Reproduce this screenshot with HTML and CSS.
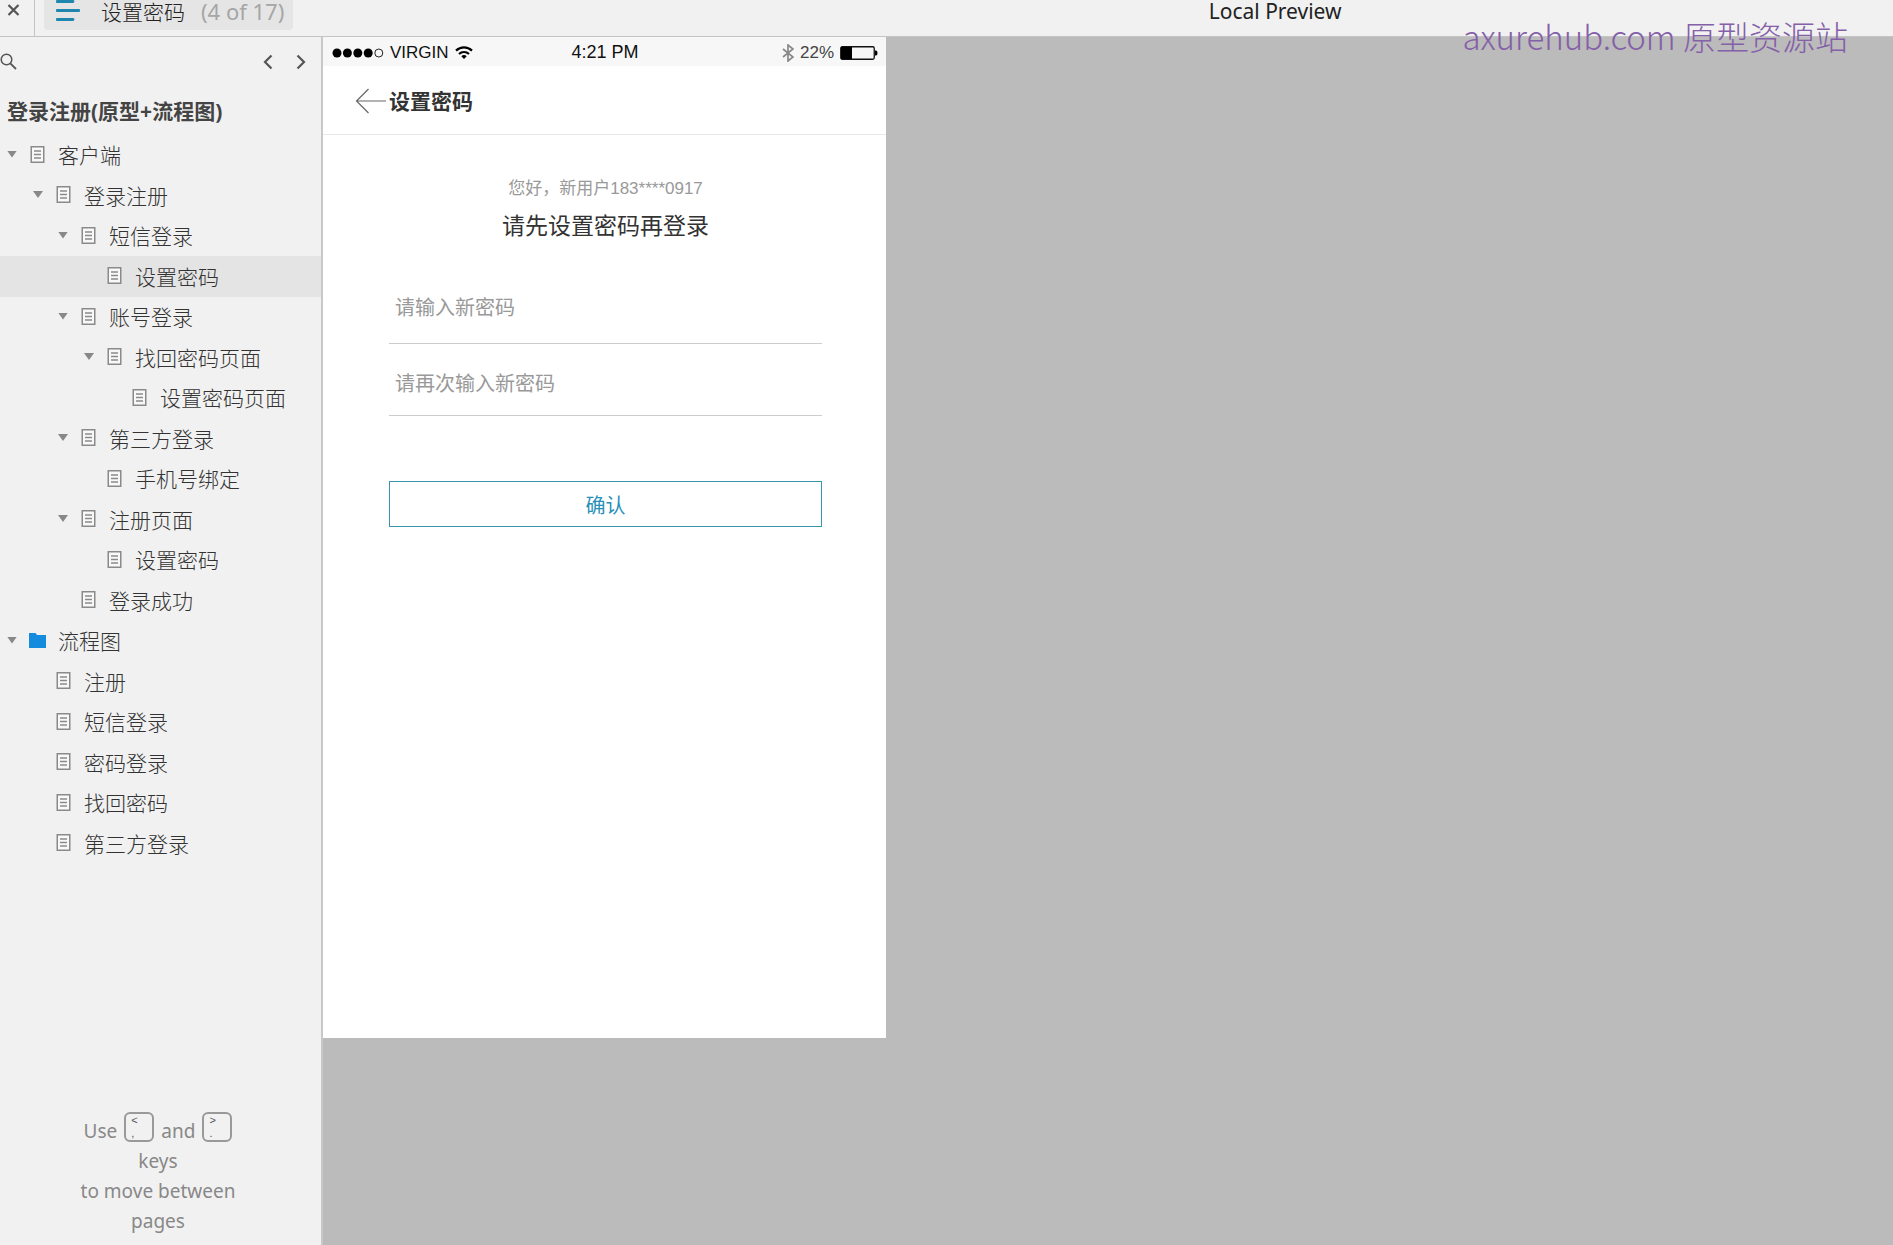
FILE: index.html
```html
<!DOCTYPE html>
<html lang="zh-CN">
<head>
<meta charset="utf-8">
<meta name="viewport" content="width=device-width, initial-scale=1">
<title>设置密码</title>
<link rel="stylesheet" href="styles.css">
</head>
<body>
<svg class="sprite" aria-hidden="true">
  <symbol id="doc" viewBox="0 0 14 17"><path d="M.75.75h12.5v15.5H.75z" fill="#f8f8f8" stroke="#8a8a8a" stroke-width="1.500"/><path d="M3.500 5h7M3.500 8.500h7M3.500 12h7" stroke="#8a8a8a" stroke-width="1.300"/></symbol>
  <symbol id="folder" viewBox="0 0 17 15"><path d="M0 0h6.500l1.500 2h9v13H0z" fill="#148bdc"/></symbol>
</svg>

<header class="topbar">
  <button class="close" aria-label="关闭"><svg width="13" height="12" viewBox="0 0 12 12"><path d="M1 1l10 10M11 1L1 11" stroke="#555" stroke-width="2.200"/></svg></button>
  <button class="page-menu">
    <svg width="24" height="22" viewBox="0 0 24 22"><path d="M1 1.500h16M1 10.500h22M1 19.500h16" stroke="#1f86b0" stroke-width="2.800" stroke-linecap="round"/></svg>
    <span class="page-name">设置密码</span>
    <span class="page-count">(4 of 17)</span>
  </button>
  <span class="preview-title">Local Preview</span>
</header>
<div class="watermark">axurehub.com 原型资源站</div>

<div class="workspace">
  <aside class="sidebar">
    <div class="tools">
      <button aria-label="搜索"><svg width="17" height="17" viewBox="0 0 17 17" fill="none" stroke="#555" stroke-width="1.500"><circle cx="6.500" cy="6.500" r="5.300"/><path d="M10.300 10.300L16 16" stroke-width="1.800"/></svg></button>
      <button class="previous" aria-label="上一页"><svg width="10" height="16" viewBox="0 0 10 16"><path d="M8.500 1.500L2 8l6.500 6.500" fill="none" stroke="#555" stroke-width="2.200"/></svg></button>
      <button aria-label="下一页"><svg width="10" height="16" viewBox="0 0 10 16"><path d="M1.500 1.500L8 8l-6.500 6.500" fill="none" stroke="#555" stroke-width="2.200"/></svg></button>
    </div>
    <h1 class="project">登录注册(原型+流程图)</h1>
    <nav>
      <ul class="tree">
        <li><a class="open" href="#"><svg class="icon"><use href="#doc"/></svg>客户端</a></li>
        <li><a class="open level-1" href="#"><svg class="icon"><use href="#doc"/></svg>登录注册</a></li>
        <li><a class="open level-2" href="#"><svg class="icon"><use href="#doc"/></svg>短信登录</a></li>
        <li><a class="level-3 current" href="#" aria-current="page"><svg class="icon"><use href="#doc"/></svg>设置密码</a></li>
        <li><a class="open level-2" href="#"><svg class="icon"><use href="#doc"/></svg>账号登录</a></li>
        <li><a class="open level-3" href="#"><svg class="icon"><use href="#doc"/></svg>找回密码页面</a></li>
        <li><a class="level-4" href="#"><svg class="icon"><use href="#doc"/></svg>设置密码页面</a></li>
        <li><a class="open level-2" href="#"><svg class="icon"><use href="#doc"/></svg>第三方登录</a></li>
        <li><a class="level-3" href="#"><svg class="icon"><use href="#doc"/></svg>手机号绑定</a></li>
        <li><a class="open level-2" href="#"><svg class="icon"><use href="#doc"/></svg>注册页面</a></li>
        <li><a class="level-3" href="#"><svg class="icon"><use href="#doc"/></svg>设置密码</a></li>
        <li><a class="level-2" href="#"><svg class="icon"><use href="#doc"/></svg>登录成功</a></li>
        <li><a class="open" href="#"><svg class="icon"><use href="#folder"/></svg>流程图</a></li>
        <li><a class="level-1" href="#"><svg class="icon"><use href="#doc"/></svg>注册</a></li>
        <li><a class="level-1" href="#"><svg class="icon"><use href="#doc"/></svg>短信登录</a></li>
        <li><a class="level-1" href="#"><svg class="icon"><use href="#doc"/></svg>密码登录</a></li>
        <li><a class="level-1" href="#"><svg class="icon"><use href="#doc"/></svg>找回密码</a></li>
        <li><a class="level-1" href="#"><svg class="icon"><use href="#doc"/></svg>第三方登录</a></li>
      </ul>
    </nav>
    <p class="hint">
      <span class="hint-keys">Use <kbd><span>&lt;</span><span>,</span></kbd> and <kbd><span>&gt;</span><span>.</span></kbd></span>
      keys<br>to move between<br>pages
    </p>
  </aside>

  <main class="canvas">
    <section class="phone">
      <div class="status">
        <div class="carrier">
          <svg width="52" height="10" viewBox="0 0 52 10"><circle cx="5" cy="5" r="4.500"/><circle cx="15.400" cy="5" r="4.500"/><circle cx="25.800" cy="5" r="4.500"/><circle cx="36.200" cy="5" r="4.500"/><circle cx="46.800" cy="5" r="4" fill="none" stroke="#222"/></svg>
          <span>VIRGIN</span>
          <svg width="18" height="13" viewBox="0 0 18 13" fill="none" stroke="#000" stroke-width="2.200"><path d="M1 4.600C5.500.2 12.500.2 17 4.600M4 8c2.800-2.700 7.200-2.700 10 0"/><path d="M6.300 10.200c1.500-1.500 3.900-1.500 5.400 0L9 13z" fill="#000" stroke="none"/></svg>
        </div>
        <time class="clock">4:21 PM</time>
        <div class="power">
          <svg width="12" height="18" viewBox="0 0 12 18"><path d="M1 5l10 8-5 4V1l5 4-10 8" fill="none" stroke="#888" stroke-width="1.700"/></svg>
          <span>22%</span>
          <svg width="38" height="14" viewBox="0 0 38 14"><rect x=".75" y=".75" width="33.500" height="12.500" rx="1.500" fill="none" stroke="#111" stroke-width="1.300"/><path d="M1 1h11v12H1z"/><path d="M35 4.500h1q1.500 0 1.500 2.500T36 9.500h-1z"/></svg>
        </div>
      </div>
      <header class="title-bar">
        <a href="#" aria-label="返回"><svg width="31" height="26" viewBox="0 0 31 26"><path d="M13.500 1L1.500 13l12 12M1.500 13H31" fill="none" stroke="#666" stroke-width="1.200"/></svg></a>
        <h2>设置密码</h2>
      </header>
      <form class="form">
        <p class="greeting">您好，新用户183****0917</p>
        <h3>请先设置密码再登录</h3>
        <input class="first" type="password" placeholder="请输入新密码" aria-label="请输入新密码">
        <input class="second" type="password" placeholder="请再次输入新密码" aria-label="请再次输入新密码">
        <button class="confirm" type="button">确认</button>
      </form>
    </section>
  </main>
</div>
</body>
</html>
```
FILE: styles.css
```css
* { box-sizing: border-box; margin: 0; padding: 0; }

body {
  position: relative;
  display: flex;
  flex-direction: column;
  min-height: 100vh;
  background: #bbb;
  color: #444;
  font-family: "Noto Sans", "Noto Sans CJK SC", sans-serif;
  font-size: 21px;
}

svg { display: block; flex: none; }
button { border: 0; background: none; font: inherit; color: inherit; cursor: pointer; }
a { color: inherit; text-decoration: none; }
.sprite { position: absolute; width: 0; height: 0; }

/* Top bar */
.topbar {
  display: grid;
  grid-template-columns: 35px auto 1fr;
  align-items: start;
  height: 37px;
  background: #f1f1f1;
  border-bottom: 1px solid #c4c4c4;
}
.close { display: flex; height: 36px; padding: 4px 0 0 7px; border-right: 1px solid #c4c4c4; }
.page-menu {
  display: flex;
  height: 30px;
  margin-left: 9px;
  padding: 0 9px 0 12px;
  border-radius: 0 0 4px 4px;
  background: #e5e5e5;
  line-height: 22px;
}
.page-name { margin-left: 21px; color: #222; font-family: "Noto Sans CJK SC", sans-serif; font-weight: 300; }
.page-count { margin-left: 16px; color: #a6a6a6; font-size: 22px; }
.preview-title { justify-self: center; padding-left: 364px; color: #222; font-size: 21px; line-height: 22px; }

.watermark {
  position: absolute;
  top: 12px;
  right: 45px;
  color: #8460a8;
  font-family: "Noto Sans CJK SC", sans-serif;
  font-size: 33px;
  font-weight: 300;
  line-height: 48px;
}

.workspace { display: flex; flex: 1; }

/* Page tree */
.sidebar {
  display: flex;
  flex: none;
  flex-direction: column;
  width: 323px;
  border-right: 2px solid #c8c8c8;
  background: #f1f1f1;
}
.tools { display: flex; gap: 23px; padding: 16px 15px 0 0; }
.tools .previous { margin-left: auto; }
.project { padding: 25px 0 8px 7px; font-size: 21px; line-height: 32px; }
.tree { list-style: none; }
.tree a {
  display: flex;
  align-items: center;
  height: 40px;
  padding: 0 0 2px 7px;
  color: #333;
  font-family: "Noto Sans CJK SC", sans-serif;
  font-weight: 300;
}
.tree li:nth-child(even) a { height: 41px; }
.tree a::before { content: ""; width: 10px; height: 7px; margin-right: 12px; }
.tree .open::before { background: #888; clip-path: polygon(0 0, 100% 0, 50% 100%); }
.tree .level-1 { padding-left: 33px; }
.tree .level-2 { padding-left: 58px; }
.tree .level-3 { padding-left: 84px; }
.tree .level-4 { padding-left: 109px; }
.tree .current { background: #e4e4e4; }
.icon { width: 17px; height: 17px; margin-right: 12px; }

.hint {
  margin-top: auto;
  padding: 0 5px 9px 0;
  color: #888;
  font-size: 19px;
  line-height: 30px;
  text-align: center;
}
.hint-keys { display: flex; justify-content: center; gap: 7px; }
kbd {
  display: flex;
  flex-direction: column;
  width: 30px;
  height: 30px;
  margin-top: -4px;
  padding-left: 5px;
  border: 2px solid #999;
  border-radius: 6px;
  color: #555;
  font: 11px/13px "Liberation Sans", sans-serif;
  text-align: left;
}

/* Phone prototype */
.canvas { flex: 1; }
.phone { width: 563px; min-height: 1001px; background: #fff; }
.status {
  display: grid;
  grid-template-columns: 1fr auto 1fr;
  align-items: center;
  height: 29px;
  padding: 2px 8px 0 9px;
  background: #f7f7f7;
  color: #111;
  font-family: "Liberation Sans", sans-serif;
  font-size: 17px;
}
.carrier, .power { display: flex; align-items: center; gap: 6px; }
.power { justify-content: flex-end; color: #444; }
.clock { font-size: 18px; }
.title-bar {
  display: flex;
  align-items: center;
  gap: 3px;
  height: 69px;
  padding: 2px 0 0 32px;
  border-bottom: 1px solid #e8e8e8;
  color: #333;
}
.title-bar h2 { font-size: 21px; line-height: 32px; }
.form {
  display: flex;
  flex-direction: column;
  padding: 42px 64px 0 66px;
  font-family: "Liberation Sans", "Noto Sans CJK SC", sans-serif;
}
.greeting { color: #999; font-size: 17px; line-height: 24px; text-align: center; }
.form h3 { margin: 10px 0 30px; color: #333; font-size: 23px; font-weight: 400; line-height: 30px; text-align: center; }
.form input {
  width: 100%;
  padding: 2px 6px 0;
  border: 0;
  border-bottom: 1px solid #ccc;
  outline: 0;
  background: none;
  font: inherit;
  font-size: 20px;
}
.form input::placeholder { color: #999; }
.form .first { height: 73px; }
.form .second { height: 65px; margin-top: 7px; }
.confirm { height: 46px; margin-top: 65px; border: 1px solid #3a93ad; color: #2690b8; font-size: 20px; }
```
